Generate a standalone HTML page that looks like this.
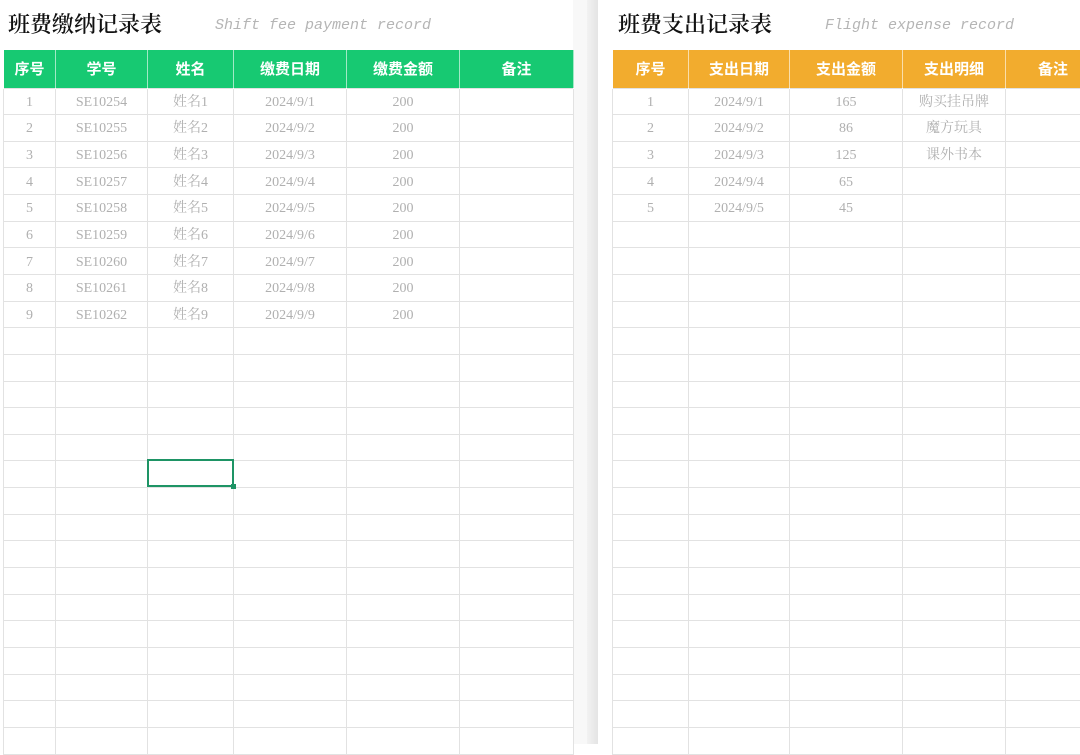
<!DOCTYPE html>
<html><head><meta charset="utf-8"><style>
*{margin:0;padding:0;box-sizing:border-box}
body{width:1080px;height:744px;overflow:hidden;background:#fff;position:relative;font-family:"Liberation Serif","Noto Serif CJK SC",serif}
.title{position:absolute;top:8px;font-size:22px;color:#111;font-family:"Noto Serif CJK SC",serif;font-weight:600}
.sub{position:absolute;top:17px;font-family:"Liberation Mono",monospace;font-style:italic;font-size:15px;color:#b5b5b5}
table{position:absolute;top:50px;border-collapse:collapse;table-layout:fixed}
th{height:38px;color:#fff;font-family:"Noto Sans CJK SC",sans-serif;font-weight:bold;font-size:15px;border-left:1px solid rgba(255,255,255,.6);border-right:1px solid rgba(255,255,255,.6)}
td{height:26.65px;border:1px solid #e2e2e2;text-align:center;font-size:14px;color:#b0b0b0;padding:3px 0 0 0;line-height:1}
.g th{background:#17c972}
.o th{background:#f2ac2e}
.gap1{position:absolute;left:573px;top:0;width:14px;height:744px;background:#f8f8f8}
.gap2{position:absolute;left:587px;top:0;width:11px;height:744px;background:linear-gradient(90deg,#f2f2f2,#e4e4e4)}
.sel{position:absolute;left:147px;top:459px;width:87px;height:28px;border:2px solid #1e9465}
.sel:after{content:"";position:absolute;right:-4px;bottom:-4px;width:5px;height:5px;background:#1e9465}
</style></head><body>
<div class="title" style="left:8px">班费缴纳记录表</div>
<div class="sub" style="left:215px">Shift fee payment record</div>
<div class="title" style="left:618px">班费支出记录表</div>
<div class="sub" style="left:825px">Flight expense record</div>
<div class="gap1"></div><div class="gap2"></div>

<table class="g" style="left:3px;width:570px">
<colgroup><col style="width:52px"><col style="width:92px"><col style="width:86px"><col style="width:113px"><col style="width:113px"><col style="width:114px"></colgroup>
<tr><th>序号</th><th>学号</th><th>姓名</th><th>缴费日期</th><th>缴费金额</th><th>备注</th></tr>
<tr><td>1</td><td>SE10254</td><td>姓名1</td><td>2024/9/1</td><td>200</td><td></td></tr>
<tr><td>2</td><td>SE10255</td><td>姓名2</td><td>2024/9/2</td><td>200</td><td></td></tr>
<tr><td>3</td><td>SE10256</td><td>姓名3</td><td>2024/9/3</td><td>200</td><td></td></tr>
<tr><td>4</td><td>SE10257</td><td>姓名4</td><td>2024/9/4</td><td>200</td><td></td></tr>
<tr><td>5</td><td>SE10258</td><td>姓名5</td><td>2024/9/5</td><td>200</td><td></td></tr>
<tr><td>6</td><td>SE10259</td><td>姓名6</td><td>2024/9/6</td><td>200</td><td></td></tr>
<tr><td>7</td><td>SE10260</td><td>姓名7</td><td>2024/9/7</td><td>200</td><td></td></tr>
<tr><td>8</td><td>SE10261</td><td>姓名8</td><td>2024/9/8</td><td>200</td><td></td></tr>
<tr><td>9</td><td>SE10262</td><td>姓名9</td><td>2024/9/9</td><td>200</td><td></td></tr>
<tr><td></td><td></td><td></td><td></td><td></td><td></td></tr>
<tr><td></td><td></td><td></td><td></td><td></td><td></td></tr>
<tr><td></td><td></td><td></td><td></td><td></td><td></td></tr>
<tr><td></td><td></td><td></td><td></td><td></td><td></td></tr>
<tr><td></td><td></td><td></td><td></td><td></td><td></td></tr>
<tr><td></td><td></td><td></td><td></td><td></td><td></td></tr>
<tr><td></td><td></td><td></td><td></td><td></td><td></td></tr>
<tr><td></td><td></td><td></td><td></td><td></td><td></td></tr>
<tr><td></td><td></td><td></td><td></td><td></td><td></td></tr>
<tr><td></td><td></td><td></td><td></td><td></td><td></td></tr>
<tr><td></td><td></td><td></td><td></td><td></td><td></td></tr>
<tr><td></td><td></td><td></td><td></td><td></td><td></td></tr>
<tr><td></td><td></td><td></td><td></td><td></td><td></td></tr>
<tr><td></td><td></td><td></td><td></td><td></td><td></td></tr>
<tr><td></td><td></td><td></td><td></td><td></td><td></td></tr>
<tr><td></td><td></td><td></td><td></td><td></td><td></td></tr>
</table>

<table class="o" style="left:612px;width:500px">
<colgroup><col style="width:76px"><col style="width:101px"><col style="width:113px"><col style="width:103px"><col style="width:107px"></colgroup>
<tr><th>序号</th><th>支出日期</th><th>支出金额</th><th>支出明细</th><th style="text-align:left;padding-left:32px">备注</th></tr>
<tr><td>1</td><td>2024/9/1</td><td>165</td><td>购买挂吊牌</td><td></td></tr>
<tr><td>2</td><td>2024/9/2</td><td>86</td><td>魔方玩具</td><td></td></tr>
<tr><td>3</td><td>2024/9/3</td><td>125</td><td>课外书本</td><td></td></tr>
<tr><td>4</td><td>2024/9/4</td><td>65</td><td></td><td></td></tr>
<tr><td>5</td><td>2024/9/5</td><td>45</td><td></td><td></td></tr>
<tr><td></td><td></td><td></td><td></td><td></td></tr>
<tr><td></td><td></td><td></td><td></td><td></td></tr>
<tr><td></td><td></td><td></td><td></td><td></td></tr>
<tr><td></td><td></td><td></td><td></td><td></td></tr>
<tr><td></td><td></td><td></td><td></td><td></td></tr>
<tr><td></td><td></td><td></td><td></td><td></td></tr>
<tr><td></td><td></td><td></td><td></td><td></td></tr>
<tr><td></td><td></td><td></td><td></td><td></td></tr>
<tr><td></td><td></td><td></td><td></td><td></td></tr>
<tr><td></td><td></td><td></td><td></td><td></td></tr>
<tr><td></td><td></td><td></td><td></td><td></td></tr>
<tr><td></td><td></td><td></td><td></td><td></td></tr>
<tr><td></td><td></td><td></td><td></td><td></td></tr>
<tr><td></td><td></td><td></td><td></td><td></td></tr>
<tr><td></td><td></td><td></td><td></td><td></td></tr>
<tr><td></td><td></td><td></td><td></td><td></td></tr>
<tr><td></td><td></td><td></td><td></td><td></td></tr>
<tr><td></td><td></td><td></td><td></td><td></td></tr>
<tr><td></td><td></td><td></td><td></td><td></td></tr>
<tr><td></td><td></td><td></td><td></td><td></td></tr>
</table>
<div class="sel"></div>
</body></html>
